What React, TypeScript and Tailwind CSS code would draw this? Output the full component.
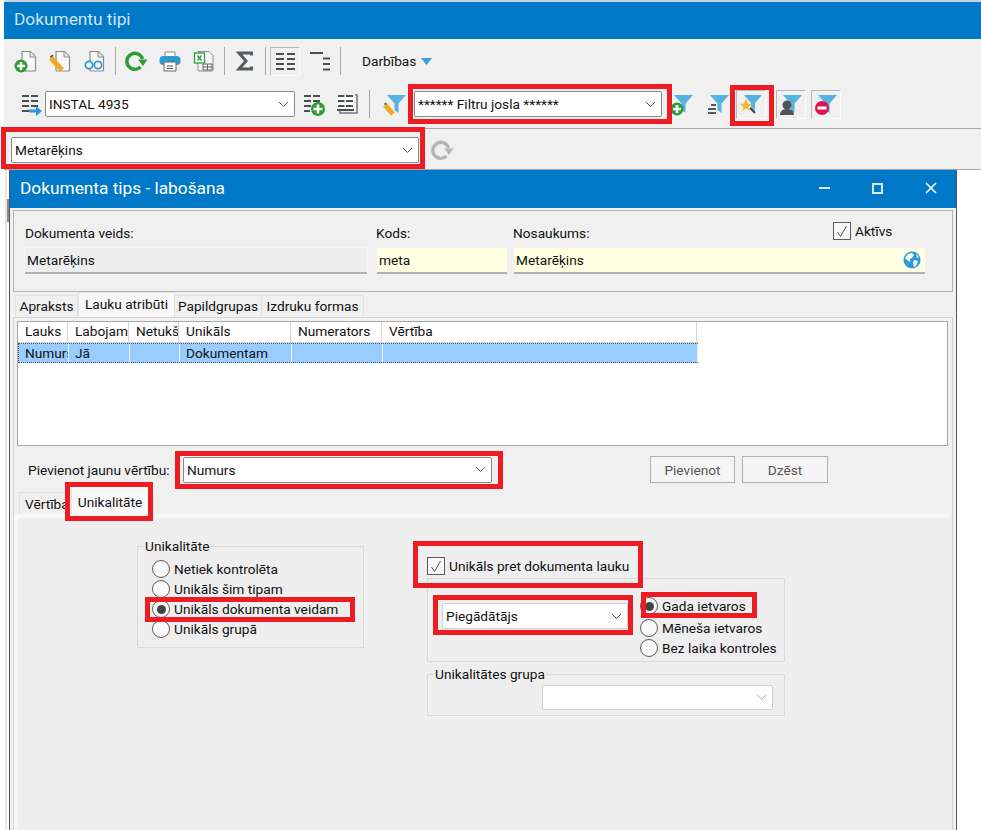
import React from "react";

const Doc = () => (
  <>
    <path d="M8 2.500h8.500l5 5V21a1 1 0 0 1-1 1H9a1 1 0 0 1-1-1z" fill="#f8f8f8" stroke="#8c8c8c" strokeWidth="1.2" />
    <path d="M16 2.500v5.500h5.500" fill="#e4e4e4" stroke="#8c8c8c" />
  </>
);

const Plus = ({ cx, cy, r = 6.5 }: { cx: number; cy: number; r?: number }) => (
  <>
    <circle cx={cx} cy={cy} r={r} fill="#2e9b34" />
    <path d={`M${cx - r + 2.5} ${cy}h${2 * r - 5}M${cx} ${cy - r + 2.5}v${2 * r - 5}`} stroke="#fff" strokeWidth="2.6" />
  </>
);

const Funnel = ({ pressed }: { pressed?: boolean }) => (
  <path d={pressed ? "M5 3h18l-7 8v9l-4-3v-6z" : "M4 3h19l-7.500 8.500V21l-4-3v-6.500z"} fill="#54b3e2" />
);

const Bars = () => <path d="M3 4h7M12 4h7M3 9h7M12 9h7M3 14h7M12 14h7" stroke="#4a4f52" strokeWidth="2" />;

const icons: Record<string, React.ReactNode> = {
  newDoc: (
    <>
      <Doc />
      <Plus cx={7} cy={17} />
    </>
  ),
  editDoc: (
    <>
      <Doc />
      <path d="M3 9l11 12" stroke="#f2a922" strokeWidth="5" />
      <path d="M1.800 7.800l2.600-2.400 1.200 1.300-2.600 2.400z" fill="#555" />
    </>
  ),
  viewDoc: (
    <>
      <Doc />
      <circle cx={7} cy={16} r={3.6} fill="#fff" stroke="#2b9ad6" strokeWidth="1.7" />
      <circle cx={16} cy={16} r={3.6} fill="#fff" stroke="#2b9ad6" strokeWidth="1.7" />
      <path d="M10.500 15.500h2" stroke="#2b9ad6" strokeWidth="1.5" />
    </>
  ),
  refresh: (
    <>
      <path d="M16.500 18A8 8 0 1 1 18.500 10" fill="none" stroke="#2e9b34" strokeWidth="3.4" />
      <path d="M14 10.500h9.500L19 17z" fill="#2e9b34" />
    </>
  ),
  refreshOff: (
    <>
      <path d="M16.500 18A8 8 0 1 1 18.500 10" fill="none" stroke="#b5b5b5" strokeWidth="3.4" />
      <path d="M14 10.500h9.500L19 17z" fill="#b5b5b5" />
    </>
  ),
  print: (
    <>
      <path d="M7 7V3h10v4" fill="#fff" stroke="#8c8c8c" />
      <rect x="1.500" y="7" width="21" height="9" rx="4" fill="#2b9ad6" />
      <path d="M6 13h12v9H6z" fill="#fff" stroke="#666" />
      <path d="M9 17h6M9 19.500h6" stroke="#555" strokeWidth="1.2" />
    </>
  ),
  excel: (
    <>
      <path d="M6 2.500h11l4 4V21a1 1 0 0 1-1 1H7a1 1 0 0 1-1-1z" fill="#f5f5f5" stroke="#8c8c8c" />
      <rect x="2.500" y="4" width="10" height="10" fill="#fff" stroke="#2e9b34" strokeWidth="1.3" />
      <path d="M5.500 6.500l4 5M9.500 6.500l-4 5" stroke="#2e9b34" strokeWidth="1.4" />
      <path d="M11 15h9v6h-9zM11 18h9M15.500 15v6" fill="none" stroke="#666" />
    </>
  ),
  sigma: <path d="M18.500 6.500V4H6l7 8-7 8h12.500v-2.500" fill="none" stroke="#555c60" strokeWidth="3" />,
  grid: <path d="M3 5h8M14 5h8M3 10h8M14 10h8M3 15h8M14 15h8M3 20h8M14 20h8" stroke="#4a4f52" strokeWidth="2" />,
  indent: <path d="M2 4h13M15 9.500h7M15 15h7M15 20.500h7" stroke="#4a4f52" strokeWidth="2" />,
  listGo: (
    <>
      <Bars />
      <path d="M3 19h7" stroke="#4a4f52" strokeWidth="2" />
      <path d="M10 17.500h7V14l6 5-6 5v-3.500h-7z" fill="#2b9ad6" />
    </>
  ),
  listAdd: (
    <>
      <Bars />
      <path d="M3 19h6" stroke="#4a4f52" strokeWidth="2" />
      <Plus cx={17} cy={17} r={7} />
    </>
  ),
  listStack: (
    <>
      <path d="M20 3h2v18H5v-2" fill="none" stroke="#777" strokeWidth="1.5" />
      <path d="M2 3h17v15H2z" fill="#fff" />
      <path d="M3 4h6.500M11 4h7M3 9h6.500M11 9h7M3 14h6.500M11 14h7M2 18h17" stroke="#4a4f52" strokeWidth="1.800" />
    </>
  ),
  filterEdit: (
    <>
      <Funnel />
      <path d="M2 13l8 9" stroke="#f2a922" strokeWidth="5" />
      <path d="M1 12l1.500-1.500 1.200 1.200-1.500 1.500z" fill="#555" />
    </>
  ),
  filterAdd: (
    <>
      <Funnel />
      <Plus cx={7} cy={17} />
    </>
  ),
  filterList: (
    <>
      <Funnel />
      <path d="M5 13h5M2 17h8M2 21h8" stroke="#555c60" strokeWidth="2" />
    </>
  ),
  filterPin: (
    <>
      <Funnel pressed />
      <path d="M7 7l2 4.500 4 .5-3.500 3 1 4-3.500-2.500L3.500 19l1-4L1 12l4-.5z" fill="#f5b82e" />
      <path d="M11 16l5 5" stroke="#444" strokeWidth="1.800" />
    </>
  ),
  filterUser: (
    <>
      <Funnel />
      <circle cx={8} cy={13} r={4.500} fill="#4f5558" />
      <path d="M1 23c0-4 3-6 7-6s7 2 7 6z" fill="#4f5558" />
    </>
  ),
  filterOff: (
    <>
      <Funnel />
      <circle cx={8} cy={16} r={7} fill="#e0134f" />
      <rect x="3.500" y="14.500" width="9" height="3" fill="#fff" />
    </>
  ),
};

const IconBtn = ({ name, active, className = "" }: { name: string; active?: boolean; className?: string }) => (
  <div
    className={`flex h-[29px] shrink-0 items-center justify-center ${active ? "w-[30px] border border-[#fbfbfb] border-t-[#b9b9b9] border-l-[#b9b9b9]" : "w-[34px]"} ${className}`}
  >
    <svg width="24" height="24" viewBox="0 0 24 24">
      {icons[name]}
    </svg>
  </div>
);

const Sep = ({ className = "" }: { className?: string }) => <div className={`h-[28px] w-px shrink-0 bg-[#a8a8a8] ${className}`} />;

const Chevron = ({ color = "#555" }: { color?: string }) => (
  <svg width="11" height="7" viewBox="0 0 11 7" className="shrink-0">
    <path d="M1 1l4.500 4.500L10 1" fill="none" stroke={color} />
  </svg>
);

const Combo = ({ value, className, chevron }: { value?: string; className: string; chevron?: string }) => (
  <div className={`flex shrink-0 items-center justify-between rounded-[2px] border bg-white pl-[3px] pr-[5px] ${className}`}>
    <span className="whitespace-nowrap">{value}</span>
    <Chevron color={chevron} />
  </div>
);

const Radio = ({ label, checked, className = "" }: { label: string; checked?: boolean; className?: string }) => (
  <div className={`flex h-[20px] items-center whitespace-nowrap ${className}`}>
    <span className="mr-[4px] flex h-[18px] w-[18px] shrink-0 items-center justify-center rounded-full border border-[#5c5c5c] bg-[#fafafa]">
      {checked && <span className="h-[9px] w-[9px] rounded-full bg-[#444]" />}
    </span>
    {label}
  </div>
);

const Check = ({ label, className = "" }: { label: string; className?: string }) => (
  <div className={`flex items-center whitespace-nowrap ${className}`}>
    <span className="mr-[4px] flex h-[18px] w-[18px] shrink-0 items-center justify-center border border-[#5c5c5c] bg-[#f7f7f7]">
      <svg width="12" height="13" viewBox="0 0 12 13">
        <path d="M1.500 7l3 4.500L10.500 1" fill="none" stroke="#555" />
      </svg>
    </span>
    {label}
  </div>
);

const Group = ({ title, className, children }: { title: string; className: string; children: React.ReactNode }) => (
  <div className={`relative shrink-0 border border-[#dadada] ${className}`}>
    <span className="absolute -top-[10px] left-[6px] whitespace-nowrap bg-[#eeeeee] px-px">{title}</span>
    {children}
  </div>
);

const columns = [
  { title: "Lauks", cell: "Numurs", width: "w-[50px]" },
  { title: "Labojams", cell: "Jā", width: "w-[61px]" },
  { title: "Netukšs", cell: "", width: "w-[50px]" },
  { title: "Unikāls", cell: "Dokumentam", width: "w-[112px]" },
  { title: "Numerators", cell: "", width: "w-[91px]" },
  { title: "Vērtība", cell: "", width: "w-[315px]" },
];

const marks = [
  "left-[1px] top-[127px] h-[42px] w-[424px]",
  "left-[408px] top-[84px] h-[40px] w-[264px]",
  "left-[730px] top-[85px] h-[41px] w-[44px]",
  "left-[175px] top-[451px] h-[38px] w-[328px]",
  "left-[65px] top-[482px] h-[39px] w-[88px]",
  "left-[145px] top-[597px] h-[25px] w-[210px]",
  "left-[413px] top-[541px] h-[47px] w-[230px]",
  "left-[433px] top-[595px] h-[40px] w-[200px]",
  "left-[641px] top-[592px] h-[26px] w-[116px]",
];

export default function App() {
  return (
    <div className="relative h-[830px] w-[981px] overflow-hidden bg-white pl-[4px] font-['Roboto',sans-serif] text-[13.7px] leading-[18px] text-[#111]">
      <div className="absolute left-[5px] top-[170px] h-[660px] w-[2px] bg-[#e8e8e8]" />
      <div className="absolute left-[7px] top-[199px] h-[23px] w-[2px] bg-[#8a8a8a]" />

      <div className="h-[2px] bg-[#c9d3da]" />
      <div className="flex h-[37px] items-center bg-[#0078c8] pb-[3px] pl-[10px] text-[17.300px] text-[#cfe3f3]">Dokumentu tipi</div>

      <div className="bg-[#f0f0f0]">
        <div className="flex h-[44px] items-center pl-[5px]">
          <IconBtn name="newDoc" />
          <IconBtn name="editDoc" />
          <IconBtn name="viewDoc" />
          <Sep className="ml-[4px] mr-[3px]" />
          <IconBtn name="refresh" />
          <IconBtn name="print" />
          <IconBtn name="excel" />
          <Sep className="ml-[3px] mr-[3px]" />
          <IconBtn name="sigma" />
          <Sep className="ml-[3px] mr-[4px]" />
          <IconBtn name="grid" active />
          <IconBtn name="indent" className="ml-[3px]" />
          <Sep className="ml-[3px] mr-[21px]" />
          <span className="-mt-px">Darbības</span>
          <svg width="11" height="7" viewBox="0 0 11 7" className="ml-[5px]">
            <path d="M0 0h11L5.500 7z" fill="#3aa0dd" />
          </svg>
        </div>

        <div className="flex h-[46px] items-center border-b border-[#a8a8a8] pb-[3px] pl-[12px]">
          <IconBtn name="listGo" className="!w-[29px]" />
          <Combo value="INSTAL 4935" className="h-[26px] w-[250px] border-[#8a8a8a]" />
          <IconBtn name="listAdd" className="ml-[1px]" />
          <IconBtn name="listStack" />
          <Sep className="ml-[5px] mr-[10px]" />
          <IconBtn name="filterEdit" className="!w-[30px]" />
          <Combo value="****** Filtru josla ******" className="ml-[4px] h-[26px] w-[248px] border-[#8a8a8a]" />
          <IconBtn name="filterAdd" className="ml-[6px] !w-[28px]" />
          <IconBtn name="filterList" className="ml-[8px] !w-[28px]" />
          <IconBtn name="filterPin" active className="ml-[4px]" />
          <IconBtn name="filterUser" active className="ml-[10px]" />
          <IconBtn name="filterOff" active className="ml-[5px]" />
        </div>

        <div className="flex h-[41px] items-center border-b border-[#a8a8a8] pl-[7px] pt-[2px]">
          <Combo value="Metarēķins" className="h-[26px] w-[408px] border-[#8a8a8a]" />
          <IconBtn name="refreshOff" className="ml-[6px]" />
        </div>
      </div>

      {/* dialog */}
      <div className="relative ml-[5px] flex h-[660px] w-[948px] flex-col border-x border-x-[#555] bg-[#f0f0f0]">
        <div className="flex h-[38px] shrink-0 items-center justify-between bg-[#0078c8] pb-[2px] pl-[10px] pr-[19px] text-[17.300px] text-white">
          <span>Dokumenta tips - labošana</span>
          <div className="flex items-center gap-[42px]">
            <div className="h-[2px] w-[11px] bg-[#d8eaf7]" />
            <div className="h-[11px] w-[11px] border-2 border-[#d8eaf7]" />
            <svg width="12" height="12" viewBox="0 0 12 12">
              <path d="M1 1l10 10M11 1L1 11" stroke="#fff" strokeWidth="1.600" />
            </svg>
          </div>
        </div>

        <div className="mx-[3px] mt-[2px] flex h-[82px] shrink-0 border border-[#b4b4b4] pl-[11px] pt-[13px]">
          <div className="w-[351px] shrink-0">
            <div className="h-[24px]">Dokumenta veids:</div>
            <div className="flex h-[26px] w-[342px] items-center border-b-2 border-[#b0b0b0] bg-[#eeeeee] pl-[2px] shadow-[0_0_0_1px_#f6f6f6]">Metarēķins</div>
          </div>
          <div className="w-[137px] shrink-0">
            <div className="h-[24px]">Kods:</div>
            <div className="ml-px flex h-[26px] w-[130px] items-center border-b-2 border-[#b0b0b0] bg-[#ffffe1] pl-[2px]">meta</div>
          </div>
          <div className="relative w-[412px] shrink-0">
            <div className="h-[24px]">Nosaukums:</div>
            <div className="ml-px flex h-[26px] w-[411px] items-center justify-between border-b-2 border-[#b0b0b0] bg-[#ffffe1] pl-[2px] pr-[4px]">
              Metarēķins
              <svg width="18" height="18" viewBox="0 0 18 18">
                <circle cx="9" cy="9" r="8.500" fill="#2b9ad6" />
                <path d="M5 3l4-1 2 2-2 3-2 1v3L4 9 2 7zM11 9l4 1-2 5-2 1-1-4zM13 3l3 3-2 1z" fill="#fff" />
              </svg>
            </div>
            <Check label="Aktīvs" className="absolute left-[320px] -top-[2px]" />
          </div>
        </div>

        <div className="flex h-[25px] shrink-0 items-end pl-[5px]">
          <div className="flex h-[22px] w-[63px] items-center justify-center border-x border-t border-[#e2e2e2] pb-px">Apraksts</div>
          <div className="flex h-[25px] w-[97px] items-center justify-center border-x border-t border-[#e2e2e2] bg-[#f8f8f8] pb-[2px]">Lauku atribūti</div>
          <div className="flex h-[22px] w-[87px] items-center justify-center border-r border-t border-[#e2e2e2] pb-px">Papildgrupas</div>
          <div className="flex h-[22px] w-[102px] items-center justify-center border-r border-t border-[#e2e2e2] pb-px">Izdruku formas</div>
        </div>

        <div className="mx-[3px] flex min-h-0 flex-1 flex-col border-x border-t border-[#d4d4d4] pl-[3px] pr-[4px] pt-[3px]">
          <div className="h-[125px] shrink-0 border border-[#a8a8a8] bg-white">
            <div className="flex h-[21px] w-[680px] items-center border-b border-[#d8d8d8]">
              {columns.map((c) => (
                <div key={c.title} className={`${c.width} h-full shrink-0 overflow-hidden whitespace-nowrap border-r border-[#d8d8d8] pl-[7px]`}>
                  {c.title}
                </div>
              ))}
            </div>
            <div className="flex h-[20px] w-[680px] border border-dotted border-[#555] bg-[#99ccff]">
              {columns.map((c) => (
                <div key={c.title} className={`${c.width} shrink-0 overflow-hidden whitespace-nowrap border-r border-[#e8f3ff] pl-[6px]`}>
                  {c.cell}
                </div>
              ))}
            </div>
          </div>

          <div className="mt-[10px] flex h-[27px] shrink-0 items-center">
            <span className="ml-[11px] w-[155px] shrink-0 whitespace-nowrap">Pievienot jaunu vērtību:</span>
            <Combo value="Numurs" className="h-[26px] w-[309px] border-[#8a8a8a]" />
            <div className="ml-[158px] flex h-[27px] w-[85px] items-center justify-center border border-[#b0b0b0] bg-[#f5f5f5] text-[#555]">Pievienot</div>
            <div className="ml-[7px] flex h-[27px] w-[86px] items-center justify-center border border-[#b0b0b0] bg-[#f5f5f5] text-[#555]">Dzēst</div>
          </div>

          <div className="mt-[4px] flex h-[27px] shrink-0 items-end pl-[2px]">
            <div className="h-[22px] w-[53px] overflow-hidden border-x border-t border-[#e2e2e2] pl-[5px] pt-[2px]">Vērtība</div>
            <div className="flex h-[27px] w-[76px] items-center justify-center bg-[#f8f8f8] pt-[2px]">Unikalitāte</div>
          </div>

          <div className="-ml-[3px] -mr-[3px] flex min-h-0 flex-1 border-l-[4px] border-t-[4px] border-[#f7f7f7] bg-[#eeeeee]">
            <Group title="Unikalitāte" className="ml-[119px] mt-[28px] h-[102px] w-[227px] pl-[14px] pt-[12px]">
              <Radio label="Netiek kontrolēta" />
              <Radio label="Unikāls šim tipam" />
              <Radio label="Unikāls dokumenta veidam" checked />
              <Radio label="Unikāls grupā" />
            </Group>

            <div className="ml-[63px] mt-[39px] w-[358px] shrink-0">
              <Check label="Unikāls pret dokumenta lauku" className="h-[18px]" />
              <div className="mt-[3px] flex h-[84px] border border-[#dadada] pl-[14px]">
                <Combo value="Piegādātājs" className="mt-[24px] h-[26px] w-[186px] border-[#d0d0d0]" />
                <div className="ml-[12px] pt-[17px]">
                  <Radio label="Gada ietvaros" checked />
                  <Radio label="Mēneša ietvaros" className="mt-[2px]" />
                  <Radio label="Bez laika kontroles" />
                </div>
              </div>
              <Group title="Unikalitātes grupa" className="mt-[12px] h-[42px] pl-[114px] pt-[10px]">
                <Combo className="h-[25px] w-[231px] border-[#d0d0d0]" chevron="#aaa" />
              </Group>
            </div>
          </div>
        </div>
      </div>

      {marks.map((m) => (
        <div key={m} className={`absolute border-[5px] border-[#ed1c24] ${m}`} />
      ))}
    </div>
  );
}
